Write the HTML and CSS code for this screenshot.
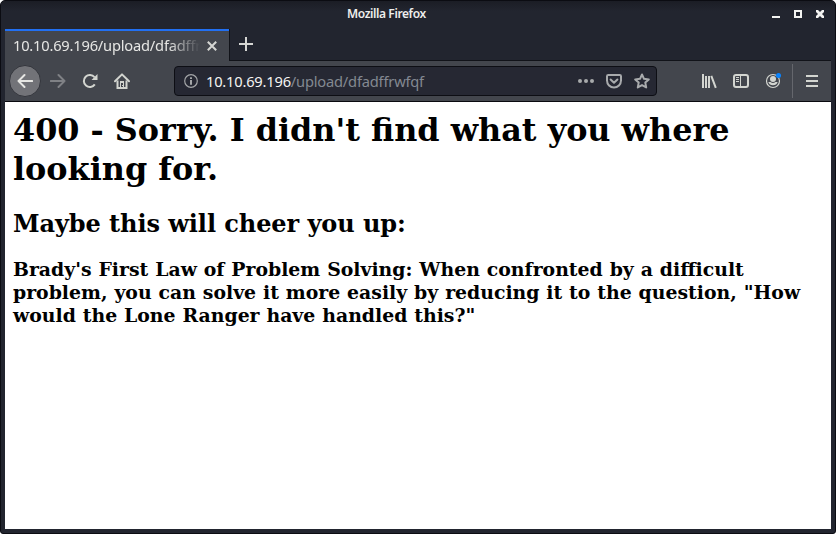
FILE: index.html
```html
<!DOCTYPE html>
<html lang="en">
<head>
<meta charset="utf-8">
<title>Mozilla Firefox</title>
<link rel="stylesheet" href="styles.css">
</head>
<body>
<div class="window">
  <header class="titlebar">
    <span class="title">Mozilla Firefox</span>
    <div class="controls">
      <svg width="8" height="8" viewBox="0 0 8 8"><path d="M0 6h8v2H0z"/></svg>
      <svg width="8" height="8" viewBox="0 0 8 8"><path fill-rule="evenodd" d="M0 0h8v8H0zM2 2v4h4V2z"/></svg>
      <svg width="8" height="8" viewBox="0 0 8 8"><path d="M0 0h2l2 2 2-2h2v2L6 4l2 2v2H6L4 6 2 8H0V6l2-2-2-2z"/></svg>
    </div>
  </header>
  <nav class="tabs">
    <div class="tab">
      <span class="tab-label">10.10.69.196/upload/dfadffrwfqf</span>
      <svg class="tab-close" width="10" height="10" viewBox="0 0 10 10"><path d="M.8.8l8.4 8.4M9.2.8L.8 9.2"/></svg>
    </div>
    <div class="tab-rest">
      <svg width="14" height="14" viewBox="0 0 14 14"><path d="M7 0v14M0 7h14"/></svg>
    </div>
  </nav>
  <div class="toolbar">
    <div class="back"><svg class="line" width="16" height="16" viewBox="0 0 16 16"><path d="M15.200 8H1.500M7.500 2L1.500 8l6 6"/></svg></div>
    <svg class="line forward" width="16" height="16" viewBox="0 0 16 16"><path d="M.8 8h13.700M8.500 2l6 6-6 6"/></svg>
    <svg class="reload" width="16" height="16" viewBox="0 0 16 16"><path class="stroke" d="M12.800 11.400A6 6 0 1 1 12.500 4.200"/><path class="fill" d="M15.500 1v6h-6z"/></svg>
    <svg class="home" width="16" height="16" viewBox="0 0 16 16"><path class="stroke" stroke-linecap="round" stroke-linejoin="round" d="M1 8.300L8 1.400l7 6.900"/><path class="stroke" d="M3.500 7.500V15h9V7.500"/><path class="fill" d="M6 8h4v2H6zM6 10h1v5H6zM9 10h1v5H9zM8 12h1v1H8z"/></svg>
    <div class="urlbar">
      <svg class="info" width="14" height="14" viewBox="0 0 14 14"><circle cx="7" cy="7" r="6.300"/><path d="M6 3.200h2v1.700H6zM6 6h2v4.800H6z"/></svg>
      <span class="url"><b>10.10.69.196</b>/upload/dfadffrwfqf</span>
      <div class="actions">
        <svg width="16" height="16" viewBox="0 0 16 16"><circle class="fill" cx="2" cy="8" r="2"/><circle class="fill" cx="8" cy="8" r="2"/><circle class="fill" cx="14" cy="8" r="2"/></svg>
        <svg width="16" height="16" viewBox="0 0 16 16"><path class="stroke" d="M2.300 2h11.400q1.300 0 1.300 1.300V7.500a7 7 0 0 1-14 0V3.300Q1 2 2.300 2z"/><path class="stroke" stroke-linecap="round" stroke-linejoin="round" d="M4.600 6.500L8 9.800l3.400-3.300"/></svg>
        <svg width="16" height="16" viewBox="0 0 16 16"><path class="stroke" stroke-linejoin="round" d="M8 1.500l2 4.300 4.800.6-3.500 3.200.9 4.800L8 12.100l-4.200 2.300.9-4.800-3.500-3.200 4.800-.6z"/></svg>
      </div>
    </div>
    <div class="tools">
      <svg width="16" height="16" viewBox="0 0 16 16"><path class="stroke" d="M2 1v14M5 3v12M8 3v12M10.300 2.800l4.500 12"/></svg>
      <svg width="16" height="16" viewBox="0 0 16 16"><rect class="stroke" x="1" y="2" width="14" height="12" rx="2"/><path class="stroke thin" d="M7.500 2v12"/><path class="fill" d="M3 4h3v1H3zM3 6h3v1H3zM3 8h3v1H3z"/></svg>
      <div class="account">
        <svg width="16" height="16" viewBox="0 0 16 16"><circle class="ring" cx="8" cy="8" r="6.500"/><circle class="fill" cx="8" cy="6" r="3"/><path class="fill" d="M3.300 9h2.200a4 4 0 0 0 5 0h2.200a5 5 0 0 1-9.400 0z"/></svg>
        <span class="dot"></span>
      </div>
    </div>
    <div class="menu"><svg width="12" height="12" viewBox="0 0 12 12"><path class="fill" d="M0 0h12v2H0zM0 5h12v2H0zM0 10h12v2H0z"/></svg></div>
  </div>
  <main class="page">
    <h1>400 - Sorry. I didn't find what you where looking for.</h1>
    <h2>Maybe this will cheer you up:</h2>
    <h3>Brady's First Law of Problem Solving: When confronted by a difficult problem, you can solve it more easily by reducing it to the question, "How would the Lone Ranger have handled this?"</h3>
  </main>
</div>
</body>
</html>
```
FILE: styles.css
```css
* { box-sizing: border-box; }
body { margin: 0; background: #fff; }
svg { display: block; flex: none; }
.window {
  width: 836px;
  height: 534px;
  display: flex;
  flex-direction: column;
  padding: 0 4px 4px;
  border: 1px solid #0b0c12;
  border-radius: 5px 5px 3px 3px;
  background: #22252f;
  font-family: "Noto Sans", sans-serif;
  overflow: hidden;
}
.titlebar {
  height: 28px;
  flex: none;
  display: flex;
  align-items: flex-start;
  margin: 0 -4px;
  padding: 0 11px 0 346px;
  background: linear-gradient(#1b1d25, #22252f 10px);
}
.title {
  color: #eeeeec;
  font-size: 12px;
  font-weight: 600;
  letter-spacing: -0.4px;
  line-height: 25px;
  white-space: nowrap;
}
.controls { display: flex; gap: 14px; margin: 9px 0 0 auto; fill: #f3f3f1; }
.tabs { height: 32px; flex: none; display: flex; }
.tab {
  width: 224px;
  display: flex;
  align-items: center;
  padding: 0 12px 0 8px;
  border-top: 2px solid #2270f2;
  background: #43464d;
}
.tab-label {
  width: 187px;
  overflow: hidden;
  color: #e6e6e4;
  font-size: 14.670px;
  letter-spacing: -0.2px;
  line-height: 28px;
  padding-bottom: 2px;
  white-space: nowrap;
  -webkit-mask-image: linear-gradient(to right, #000 155px, transparent 187px);
  mask-image: linear-gradient(to right, #000 155px, transparent 187px);
}
.tab-close { margin-left: auto; margin-bottom: 1px; fill: none; stroke: #d5d6d3; stroke-width: 2; }
.tab-rest {
  flex: 1;
  display: flex;
  align-items: center;
  padding: 0 0 1px 9px;
  border-left: 1px solid #111319;
  border-bottom: 1px solid #111319;
  stroke: #d5d6d3;
  stroke-width: 2;
}
.toolbar {
  height: 41px;
  flex: none;
  display: flex;
  align-items: center;
  padding-left: 4px;
  border-bottom: 1px solid #090a0f;
  background: #43464d;
  color: #d3d5d0;
}
.stroke { fill: none; stroke: currentColor; stroke-width: 2; }
.thin { stroke-width: 1; }
.fill { fill: currentColor; }
.ring { fill: none; stroke: currentColor; stroke-width: 1.2; }
.line { fill: none; stroke: currentColor; stroke-width: 2; stroke-linecap: round; stroke-linejoin: round; }
.back {
  width: 32px;
  height: 32px;
  display: flex;
  align-items: center;
  justify-content: center;
  border: 1px solid #33353c;
  border-radius: 50%;
  background: #727378;
  color: #e6e6e3;
}
.forward { margin-left: 9px; color: #7f8185; }
.reload { margin-left: 16px; }
.home { margin-left: 16px; }
.urlbar {
  width: 483px;
  height: 30px;
  display: flex;
  align-items: center;
  margin-left: 44px;
  padding: 0 6px 0 9px;
  border: 1px solid #0d0e14;
  border-radius: 4px;
  background: #262833;
}
.info { fill: none; stroke: #a4a6a8; stroke-width: 1.2; }
.info path { fill: #a4a6a8; stroke: none; }
.url { margin-left: 8px; font-size: 14.670px; line-height: 28px; letter-spacing: -0.2px; color: #838891; white-space: nowrap; }
.url b { font-weight: 400; color: #f4f4f2; }
.actions { display: flex; gap: 12px; margin-left: auto; color: #a8aaac; }
.tools { display: flex; gap: 16px; margin-left: 44px; }
.account { position: relative; }
.dot { position: absolute; top: 0; right: 0; width: 5px; height: 5px; border-radius: 50%; background: #0a84ff; }
.menu {
  height: 34px;
  display: flex;
  align-items: center;
  margin-left: 11px;
  padding-left: 13px;
  border-left: 1px solid #65676d;
}
.page { flex: 1; padding: 9px 8px 8px; background: #fff; color: #000; font-family: "DejaVu Serif", serif; }
.page h1, .page h2, .page h3 { margin: 0; font-weight: 700; }
.page h1 { font-size: 31.850px; line-height: 39px; }
.page h2 { margin-top: 20px; font-size: 24px; line-height: 29px; letter-spacing: -0.07px; }
.page h3 { margin-top: 20px; font-size: 18.850px; line-height: 23px; word-spacing: 0.350px; }
```
